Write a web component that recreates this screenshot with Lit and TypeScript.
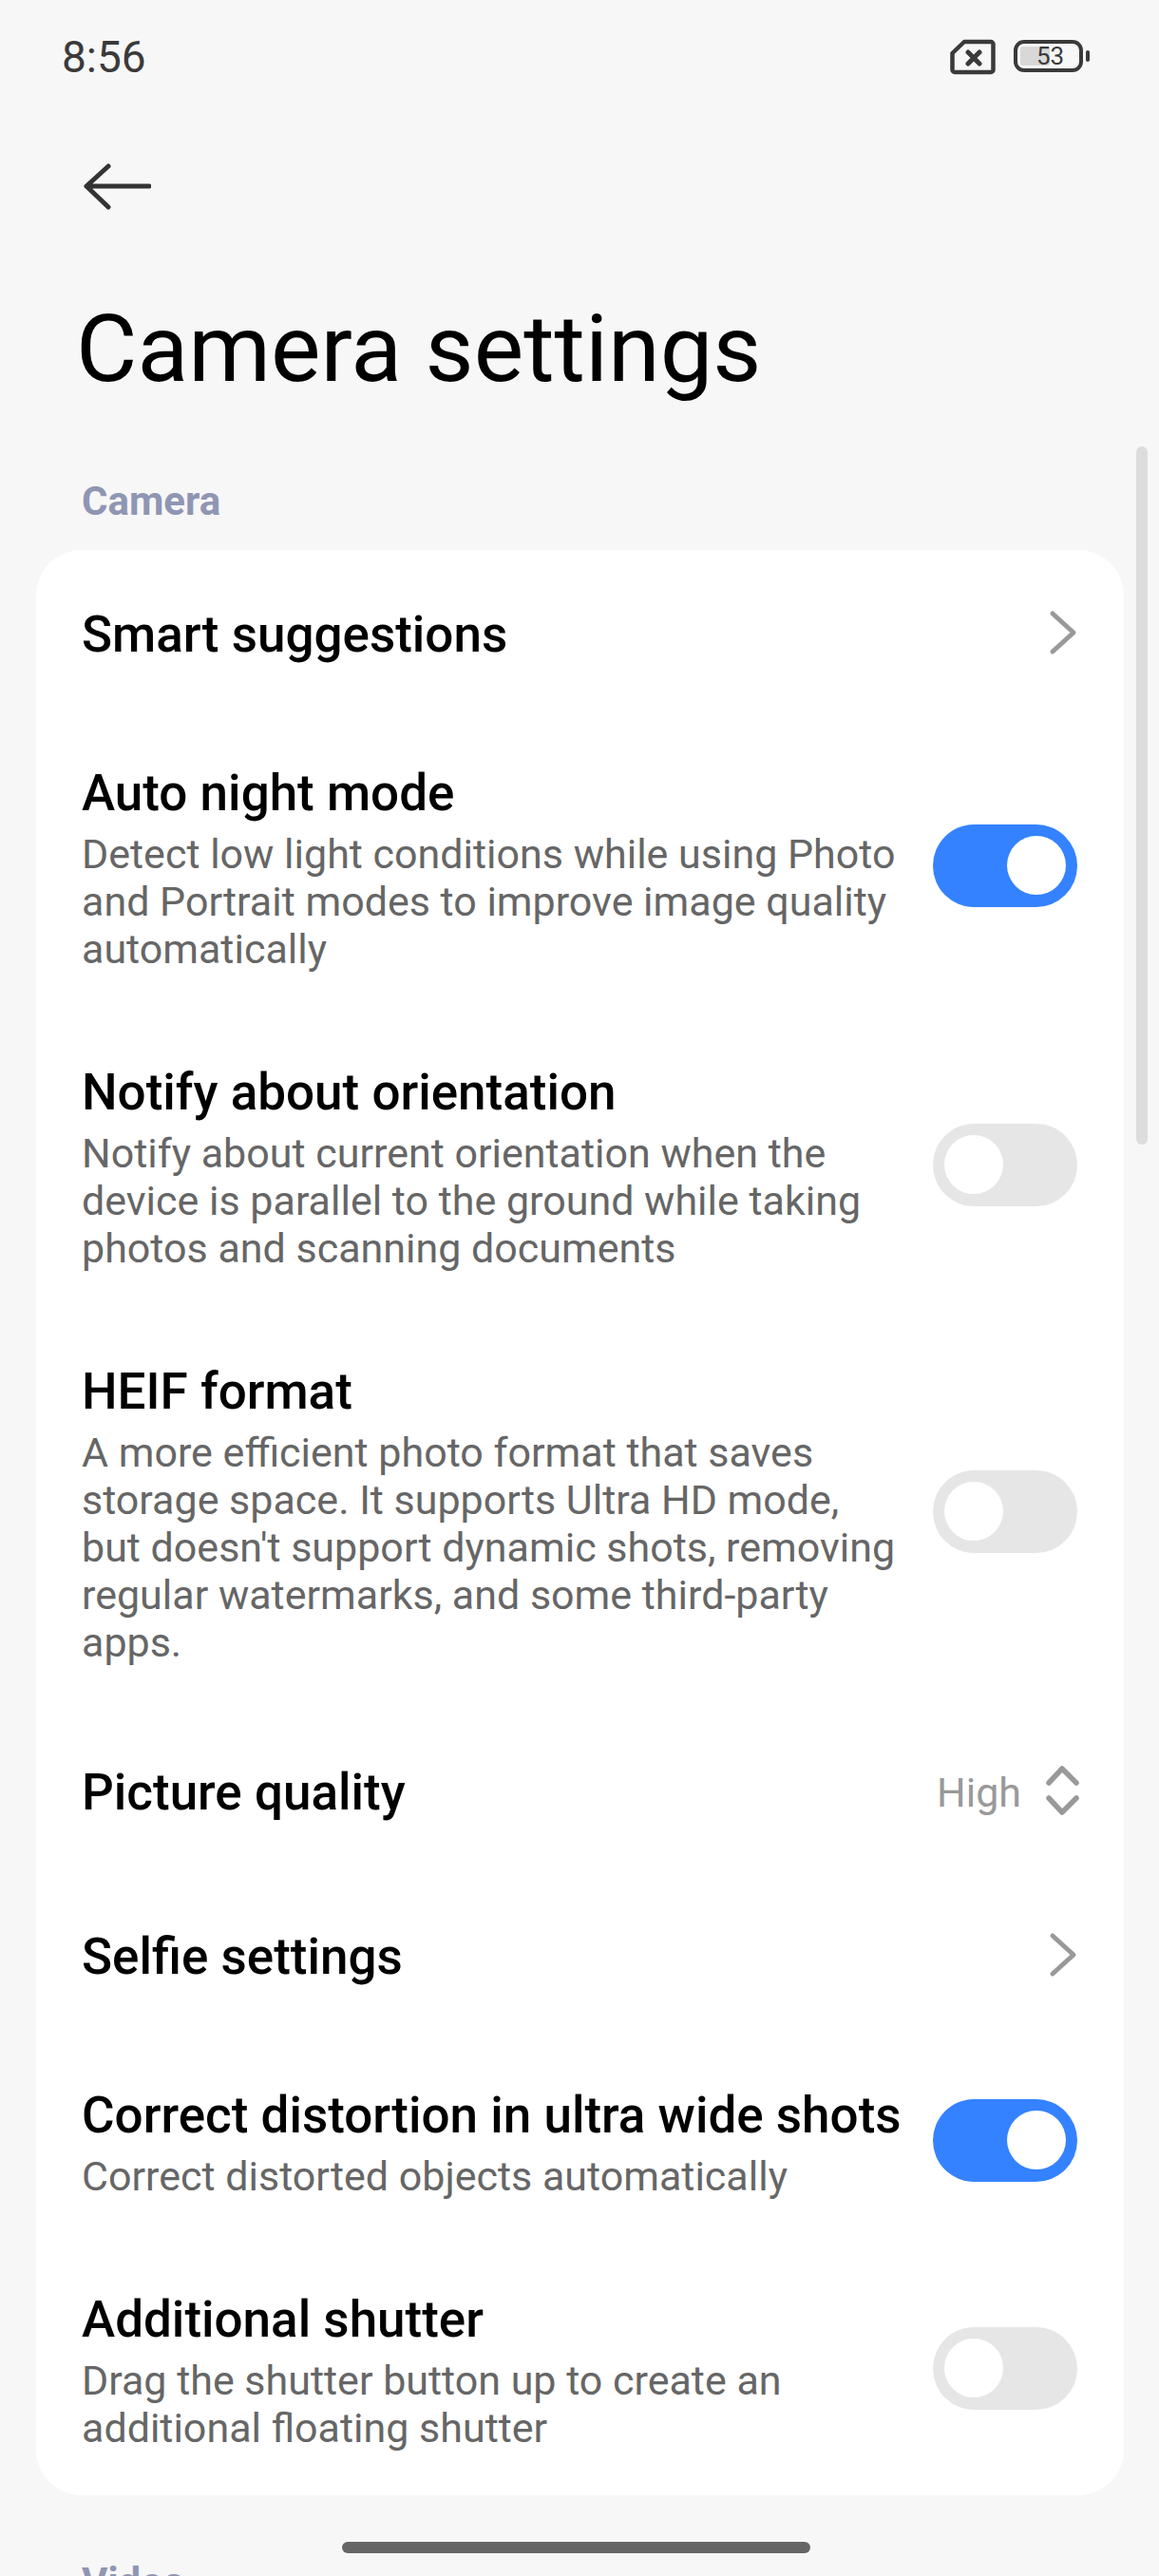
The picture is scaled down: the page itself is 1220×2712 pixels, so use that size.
import { LitElement, html, css } from "lit";
import { customElement, property } from "lit/decorators.js";

const chevron = html`<svg class="chev" width="34" height="50" viewBox="0 0 34 50">
  <path d="M6 5 L28 25 L6 45" fill="none" stroke="#999" stroke-width="5" stroke-linecap="round" stroke-linejoin="round" />
</svg>`;

const updown = html`<svg class="updown" width="40" height="56" viewBox="0 0 40 56">
  <path d="M4 18 L18 3 L33 18 M4 34 L18 49 L33 34" fill="none" stroke="#999" stroke-width="5.5" stroke-linecap="round" stroke-linejoin="round" />
</svg>`;

@customElement("ui-switch")
class UiSwitch extends LitElement {
  @property({ type: Boolean, reflect: true }) on = false;

  static styles = css`
    :host {
      display: flex;
      flex-shrink: 0;
      box-sizing: border-box;
      width: 152px;
      height: 87px;
      margin-bottom: 6px;
      padding: 0 12px;
      border-radius: 44px;
      background: #e6e6e6;
      align-items: center;
      justify-content: flex-start;
    }
    :host([on]) {
      background: #3482ff;
      justify-content: flex-end;
    }
    .knob {
      width: 62px;
      height: 62px;
      border-radius: 50%;
      background: #fff;
    }
  `;

  render() {
    return html`<div class="knob"></div>`;
  }
}

@customElement("app-root")
class AppRoot extends LitElement {
  static styles = css`
    :host {
      display: block;
      position: relative;
      width: 1220px;
      height: 2712px;
      overflow: hidden;
      background: #f7f7f7;
      font-family: Roboto, "Noto Sans", sans-serif;
    }
    .status {
      display: flex;
      justify-content: space-between;
      align-items: center;
      height: 120px;
      padding: 0 73px 0 65px;
      color: #3a3a3a;
    }
    .time {
      font-size: 46px;
    }
    .status-icons {
      display: flex;
      align-items: center;
      gap: 19px;
    }
    .battery {
      display: flex;
      align-items: center;
      gap: 3px;
      margin-bottom: 2px;
    }
    .cell {
      position: relative;
      display: flex;
      align-items: center;
      justify-content: center;
      box-sizing: border-box;
      width: 73px;
      height: 34px;
      border: 4px solid #3a3a3a;
      border-radius: 11px;
      font-size: 26px;
      line-height: 1;
      padding-left: 4px;
    }
    .fill {
      position: absolute;
      left: 3px;
      top: 3px;
      bottom: 3px;
      width: 31px;
      background: #d8d8d8;
      border-radius: 3px;
    }
    .level {
      position: relative;
    }
    .nub {
      width: 4px;
      height: 12px;
      border-radius: 2px;
      background: #3a3a3a;
    }
    .back {
      display: block;
      margin: 51px 0 0 87px;
    }
    h1 {
      margin: 86px 0 0 80px;
      font-size: 99px;
      line-height: 120px;
      font-weight: 400;
      color: #000;
    }
    .section {
      margin: 67px 0 0 86px;
      font-size: 42px;
      line-height: 50px;
      font-weight: 700;
      color: #8f96b3;
    }
    .section.top {
      margin-top: 76px;
    }
    .card {
      margin: 26px 37px 0 38px;
      border-radius: 48px;
      background: #fff;
    }
    .row {
      display: flex;
      align-items: center;
      justify-content: space-between;
      gap: 24px;
      padding: 49px 49px 46px 48px;
    }
    .row.simple {
      padding: 55px 49px 56px 48px;
    }
    .row.first {
      padding-top: 58px;
    }
    .row.quality {
      padding-top: 56px;
    }
    .text {
      min-width: 0;
      flex: 1;
    }
    .title {
      font-size: 53px;
      line-height: 62px;
      font-weight: 500;
      color: #000;
      white-space: nowrap;
    }
    .sub {
      max-width: 866px;
      margin-top: 8px;
      font-size: 43px;
      line-height: 50px;
      color: #666;
    }
    .value {
      display: flex;
      align-items: center;
      gap: 25px;
      margin-right: -6px;
      font-size: 43px;
      color: #999;
    }
    .chev {
      display: block;
      margin: 0 -2px 4px 0;
    }
    .updown {
      display: block;
    }
    .scrollbar {
      position: absolute;
      left: 1196px;
      top: 470px;
      width: 12px;
      height: 735px;
      border-radius: 6px;
      background: #dcdcdc;
    }
    .homebar {
      position: absolute;
      left: 360px;
      top: 2676px;
      width: 493px;
      height: 12px;
      border-radius: 6px;
      background: #666;
    }
  `;

  render() {
    return html`
      <div class="status">
        <span class="time">8:56</span>
        <div class="status-icons">
          <svg width="48" height="38" viewBox="0 0 48 38">
            <path d="M15 3 H43 a2.5 2.5 0 0 1 2.5 2.5 V32.5 a2.5 2.5 0 0 1 -2.5 2.5 H5 a2.5 2.5 0 0 1 -2.5 -2.5 V15 Z" fill="none" stroke="#3a3a3a" stroke-width="4.5" stroke-linejoin="round" />
            <path d="M19 14 L31 26 M31 14 L19 26" fill="none" stroke="#3a3a3a" stroke-width="5" stroke-linecap="round" />
          </svg>
          <div class="battery">
            <div class="cell"><div class="fill"></div><span class="level">53</span></div>
            <div class="nub"></div>
          </div>
        </div>
      </div>
      <svg class="back" width="72" height="50" viewBox="0 0 72 50">
        <path d="M27 4 L4 25 L27 47 M4 25 H70" fill="none" stroke="#333" stroke-width="5" stroke-linecap="round" stroke-linejoin="round" />
      </svg>
      <h1>Camera settings</h1>
      <div class="section top">Camera</div>
      <div class="card">
        <div class="row simple first">
          <div class="text"><div class="title">Smart suggestions</div></div>
          ${chevron}
        </div>
        ${this._toggleRow("Auto night mode", "Detect low light conditions while using Photo and Portrait modes to improve image quality automatically", true)}
        ${this._toggleRow("Notify about orientation", "Notify about current orientation when the device is parallel to the ground while taking photos and scanning documents", false)}
        ${this._toggleRow("HEIF format", "A more efficient photo format that saves storage space. It supports Ultra HD mode, but doesn't support dynamic shots, removing regular watermarks, and some third-party apps.", false)}
        <div class="row simple quality">
          <div class="text"><div class="title">Picture quality</div></div>
          <div class="value">High ${updown}</div>
        </div>
        <div class="row simple">
          <div class="text"><div class="title">Selfie settings</div></div>
          ${chevron}
        </div>
        ${this._toggleRow("Correct distortion in ultra wide shots", "Correct distorted objects automatically", true)}
        ${this._toggleRow("Additional shutter", "Drag the shutter button up to create an additional floating shutter", false)}
      </div>
      <div class="section">Video</div>
      <div class="scrollbar"></div>
      <div class="homebar"></div>
    `;
  }

  _toggleRow(title: string, sub: string, on: boolean) {
    return html`
      <div class="row">
        <div class="text">
          <div class="title">${title}</div>
          <div class="sub">${sub}</div>
        </div>
        <ui-switch ?on=${on}></ui-switch>
      </div>
    `;
  }
}

export { AppRoot, UiSwitch };
